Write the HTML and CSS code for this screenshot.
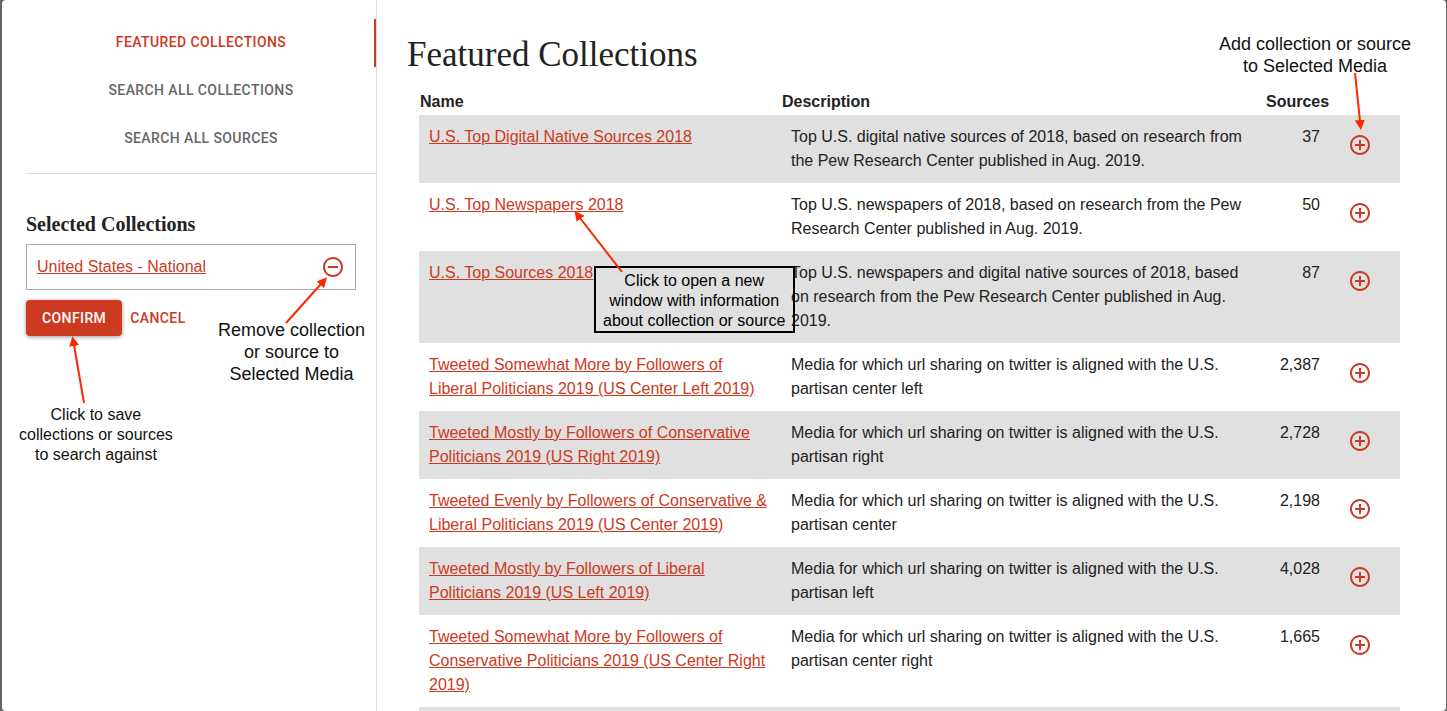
FILE: index.html
```
<!DOCTYPE html>
<html lang="en">
<head>
<meta charset="utf-8">
<title>Featured Collections</title>
<link rel="stylesheet" href="styles.css">
</head>
<body>
<svg class="defs" aria-hidden="true">
  <symbol id="add" viewBox="0 0 24 24"><path d="M13 7h-2v4H7v2h4v4h2v-4h4v-2h-4V7zm-1-5C6.480 2 2 6.480 2 12s4.480 10 10 10 10-4.480 10-10S17.520 2 12 2zm0 18c-4.410 0-8-3.590-8-8s3.590-8 8-8 8 3.590 8 8-3.590 8-8 8z"/></symbol>
  <symbol id="remove" viewBox="0 0 24 24"><path d="M7 11v2h10v-2H7zm5-9C6.480 2 2 6.480 2 12s4.480 10 10 10 10-4.480 10-10S17.520 2 12 2zm0 18c-4.410 0-8-3.590-8-8s3.590-8 8-8 8 3.590 8 8-3.590 8-8 8z"/></symbol>
</svg>
<div class="dialog">
  <aside class="sidebar">
    <nav class="tabs">
      <button class="tab tab-active" type="button">FEATURED COLLECTIONS</button>
      <button class="tab" type="button">SEARCH ALL COLLECTIONS</button>
      <button class="tab" type="button">SEARCH ALL SOURCES</button>
    </nav>
    <section class="selection">
      <h2 class="selection-title">Selected Collections</h2>
      <div class="selected-item">
        <a class="link" href="#">United States - National</a>
        <button class="remove-button" type="button" aria-label="Remove"><svg class="icon"><use href="#remove"/></svg></button>
      </div>
      <div class="actions">
        <button class="button button-primary" type="button">CONFIRM</button>
        <button class="button button-text" type="button">CANCEL</button>
      </div>
    </section>
  </aside>
  <main class="content">
    <h1 class="title">Featured Collections</h1>
    <table class="collections">
      <colgroup><col class="col-name"><col class="col-description"><col class="col-sources"><col class="col-action"></colgroup>
      <thead>
        <tr><th>Name</th><th>Description</th><th class="number">Sources</th><th></th></tr>
      </thead>
      <tbody>
        <tr><td><a class="link" href="#">U.S. Top Digital Native Sources 2018</a></td><td>Top U.S. digital native sources of 2018, based on research from the Pew Research Center published in Aug. 2019.</td><td class="number">37</td><td><button class="add-button" type="button" aria-label="Add"><svg class="icon"><use href="#add"/></svg></button></td></tr>
        <tr><td><a class="link" href="#">U.S. Top Newspapers 2018</a></td><td>Top U.S. newspapers of 2018, based on research from the Pew Research Center published in Aug. 2019.</td><td class="number">50</td><td><button class="add-button" type="button" aria-label="Add"><svg class="icon"><use href="#add"/></svg></button></td></tr>
        <tr><td><a class="link" href="#">U.S. Top Sources 2018</a></td><td>Top U.S. newspapers and digital native sources of 2018, based on research from the Pew Research Center published in Aug. 2019.</td><td class="number">87</td><td><button class="add-button" type="button" aria-label="Add"><svg class="icon"><use href="#add"/></svg></button></td></tr>
        <tr><td><a class="link" href="#">Tweeted Somewhat More by Followers of Liberal Politicians 2019 (US Center Left 2019)</a></td><td>Media for which url sharing on twitter is aligned with the U.S. partisan center left</td><td class="number">2,387</td><td><button class="add-button" type="button" aria-label="Add"><svg class="icon"><use href="#add"/></svg></button></td></tr>
        <tr><td><a class="link" href="#">Tweeted Mostly by Followers of Conservative Politicians 2019 (US Right 2019)</a></td><td>Media for which url sharing on twitter is aligned with the U.S. partisan right</td><td class="number">2,728</td><td><button class="add-button" type="button" aria-label="Add"><svg class="icon"><use href="#add"/></svg></button></td></tr>
        <tr><td><a class="link" href="#">Tweeted Evenly by Followers of Conservative &amp; Liberal Politicians 2019 (US Center 2019)</a></td><td>Media for which url sharing on twitter is aligned with the U.S. partisan center</td><td class="number">2,198</td><td><button class="add-button" type="button" aria-label="Add"><svg class="icon"><use href="#add"/></svg></button></td></tr>
        <tr><td><a class="link" href="#">Tweeted Mostly by Followers of Liberal Politicians 2019 (US Left 2019)</a></td><td>Media for which url sharing on twitter is aligned with the U.S. partisan left</td><td class="number">4,028</td><td><button class="add-button" type="button" aria-label="Add"><svg class="icon"><use href="#add"/></svg></button></td></tr>
        <tr><td><a class="link" href="#">Tweeted Somewhat More by Followers of Conservative Politicians 2019 (US Center Right 2019)</a></td><td>Media for which url sharing on twitter is aligned with the U.S. partisan center right</td><td class="number">1,665</td><td><button class="add-button" type="button" aria-label="Add"><svg class="icon"><use href="#add"/></svg></button></td></tr>
        <tr><td></td><td></td><td></td><td></td></tr>
      </tbody>
    </table>
  </main>
</div>
<p class="note note-small note-confirm">Click to save<br>collections or sources<br>to search against</p>
<p class="note note-large note-remove">Remove collection<br>or source to<br>Selected Media</p>
<p class="note note-small note-open">Click to open a new<br>window with information<br>about collection or source</p>
<p class="note note-large note-add">Add collection or source<br>to Selected Media</p>
<svg class="arrows" aria-hidden="true">
  <defs>
    <marker id="head" viewBox="0 0 10 10" refX="1" refY="5" markerWidth="10" markerHeight="10" markerUnits="userSpaceOnUse" orient="auto"><path d="M0 0 10 5 0 10z"/></marker>
  </defs>
  <path d="M286 323 321 284"/>
  <path d="M84 403 74 345"/>
  <path d="M622 272 580 218"/>
  <path d="M1355 73 1360 121"/>
</svg>
</body>
</html>
```
FILE: styles.css
```
* { box-sizing: border-box; }

body {
  margin: 0;
  position: relative;
  background: #666;
  color: #222;
  font: 16px/24px "Liberation Sans", Arial, sans-serif;
}

h1, h2, p { margin: 0; }

button {
  border: 0;
  padding: 0;
  background: none;
  font: 500 14px/24px Roboto, sans-serif;
  cursor: pointer;
}

.defs { display: none; }

.dialog {
  display: flex;
  height: 100vh;
  margin: 0 1px 0 2px;
  overflow: hidden;
  border-radius: 4px;
  background: #fff;
}

.sidebar {
  flex: 0 0 375px;
  padding: 19px 0 0 24px;
  border-right: 1px solid #ddd;
}

.tabs {
  display: flex;
  flex-direction: column;
  padding-bottom: 10px;
  border-bottom: 1px solid #ddd;
}

.tab {
  height: 48px;
  padding-bottom: 2px;
  color: #666;
  letter-spacing: 0.02857em;
}

.tab-active {
  box-shadow: inset -2px 0 #cc3a22;
  color: #cc3a22;
}

.selection { padding: 38px 20px 0 0; }

.selection-title {
  margin-bottom: 8px;
  font: bold 20px/24px "Liberation Serif", serif;
}

.selected-item {
  display: flex;
  justify-content: space-between;
  padding: 10px;
  border: 1px solid #aaa;
}

.link {
  color: #cc3a22;
  text-decoration: underline;
}

.remove-button, .add-button {
  display: grid;
  place-items: center;
  color: #cc3a22;
}

.add-button {
  width: 40px;
  height: 40px;
}

.icon {
  display: block;
  width: 24px;
  height: 24px;
  fill: currentColor;
}

.actions {
  display: flex;
  margin-top: 10px;
}

.button {
  height: 36px;
  border-radius: 4px;
  letter-spacing: 0.02857em;
}

.button-primary {
  padding: 0 16px;
  background: #cc3a22;
  box-shadow: 0 1px 4px rgba(0, 0, 0, 0.4);
  color: #fff;
}

.button-text {
  padding: 0 8px;
  color: #cc3a22;
}

.content {
  flex: 1;
  padding: 35px 46px 0 30px;
}

.title {
  margin-bottom: 14px;
  font: 35px/40px "Liberation Serif", serif;
}

.collections {
  width: calc(100% - 12px);
  margin-left: 12px;
  border-collapse: collapse;
  table-layout: fixed;
}

.col-name { width: 36.9%; }
.col-sources { width: 65px; }
.col-action { width: 70px; }

th {
  padding: 1px;
  text-align: left;
}

td {
  padding: 10px;
  vertical-align: top;
}

tbody tr:nth-child(odd) { background: #e0e0e0; }

.number { text-align: right; }

td.number { padding-left: 0; }

.note {
  position: absolute;
  color: #111;
  text-align: center;
  white-space: nowrap;
}

.note-small { font-size: 16px; line-height: 20px; }
.note-large { font-size: 18px; line-height: 22px; }
.note-confirm { top: 405px; left: 19px; }
.note-remove { top: 319px; left: 218px; }
.note-add { top: 33px; right: 36px; }

.note-open {
  top: 266px;
  left: 594px;
  padding: 3px 8px 0 7px;
  border: 2px solid #000;
  color: #000;
}

.arrows {
  position: absolute;
  inset: 0;
  width: 100%;
  height: 100%;
  pointer-events: none;
}

.arrows > path {
  fill: none;
  stroke: #ff2600;
  stroke-width: 2;
  marker-end: url(#head);
}

#head path { fill: #ff2600; }
```
